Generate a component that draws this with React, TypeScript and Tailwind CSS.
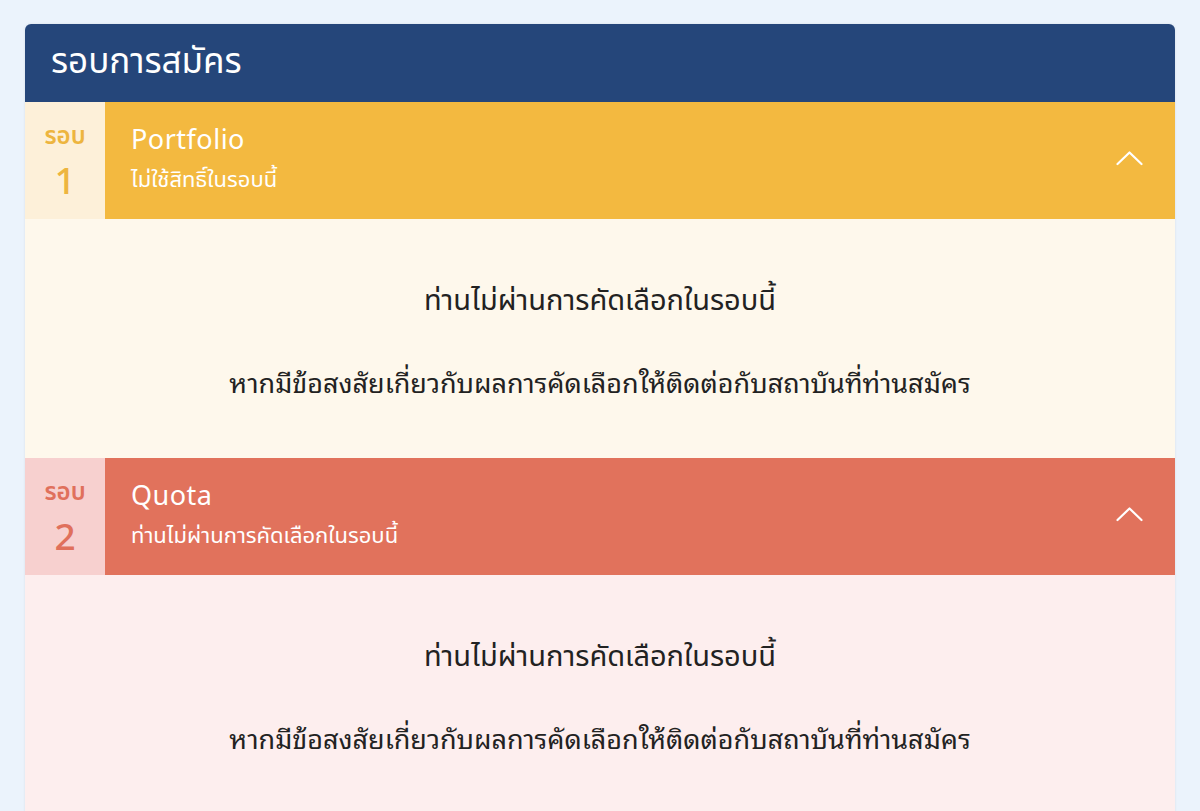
import React from "react";

type Round = {
  no: number;
  name: string;
  status: string;
  tab: string;
  bar: string;
  body: string;
  numColor: string;
};

const rounds: Round[] = [
  {
    no: 1,
    name: "Portfolio",
    status: "ไม่ใช้สิทธิ์ในรอบนี้",
    tab: "bg-[#fdf0d9]",
    bar: "bg-[#f3b940]",
    body: "bg-[#fef8ec]",
    numColor: "text-[#edb53f]",
  },
  {
    no: 2,
    name: "Quota",
    status: "ท่านไม่ผ่านการคัดเลือกในรอบนี้",
    tab: "bg-[#f7d0cf]",
    bar: "bg-[#e1725c]",
    body: "bg-[#fdeeee]",
    numColor: "text-[#e0705c]",
  },
];

const looped = { fontFamily: '"Noto Sans Thai Looped", "Noto Serif Thai", "Loma", "Garuda", "Sarabun", "Tahoma", "Noto Sans Thai", sans-serif' };

function ChevronUp() {
  return (
    <svg width="27" height="16" viewBox="0 0 27 16" fill="none" className="mb-[5px]">
      <path d="M1.5 14 L13.5 2.5 L25.5 14" stroke="white" strokeWidth="2.2" strokeLinecap="round" strokeLinejoin="round" />
    </svg>
  );
}

function RoundBlock({ r }: { r: Round }) {
  return (
    <div>
      <div className="flex h-[117px]">
        <div className={`w-[80px] shrink-0 flex flex-col items-center pt-[20px] ${r.tab}`}>
          <span className={`text-[24px] leading-[30px] font-semibold ${r.numColor}`}>รอบ</span>
          <span className={`text-[37px] leading-[40px] mt-[11px] font-medium ${r.numColor}`}>{r.no}</span>
        </div>
        <div className={`flex-1 flex items-start justify-between pl-[26px] pr-[32px] ${r.bar}`}>
          <div className="flex flex-col text-white pt-[21px]">
            <span className="text-[27px] leading-[36px] tracking-[0.5px]">{r.name}</span>
            <span className="text-[22px] leading-[28px] mt-[8px]">{r.status}</span>
          </div>
          <div className="self-center">
            <ChevronUp />
          </div>
        </div>
      </div>
      <div className={`h-[239px] flex flex-col items-center pt-[62px] text-[#222] ${r.body}`}>
        <p className="text-[29px] leading-[40px]">ท่านไม่ผ่านการคัดเลือกในรอบนี้</p>
        <p className="text-[27px] leading-[32px] mt-[44px]" style={looped}>
          หากมีข้อสงสัยเกี่ยวกับผลการคัดเลือกให้ติดต่อกับสถาบันที่ท่านสมัคร
        </p>
      </div>
    </div>
  );
}

export default function App() {
  return (
    <div
      className="min-h-[811px] bg-[#ebf3fc] px-[25px] pt-[24px]"
      style={{ fontFamily: '"Noto Sans Thai", "Noto Sans", "DejaVu Sans", sans-serif' }}
    >
      <div className="rounded-t-[6px] overflow-hidden shadow-[0_0_3px_rgba(0,0,0,0.08)]">
        <div className="h-[78px] bg-[#25467a] flex items-center pl-[26px]">
          <h1 className="text-white text-[35px] leading-[44px]">รอบการสมัคร</h1>
        </div>
        {rounds.map((r) => (
          <RoundBlock key={r.no} r={r} />
        ))}
      </div>
    </div>
  );
}
